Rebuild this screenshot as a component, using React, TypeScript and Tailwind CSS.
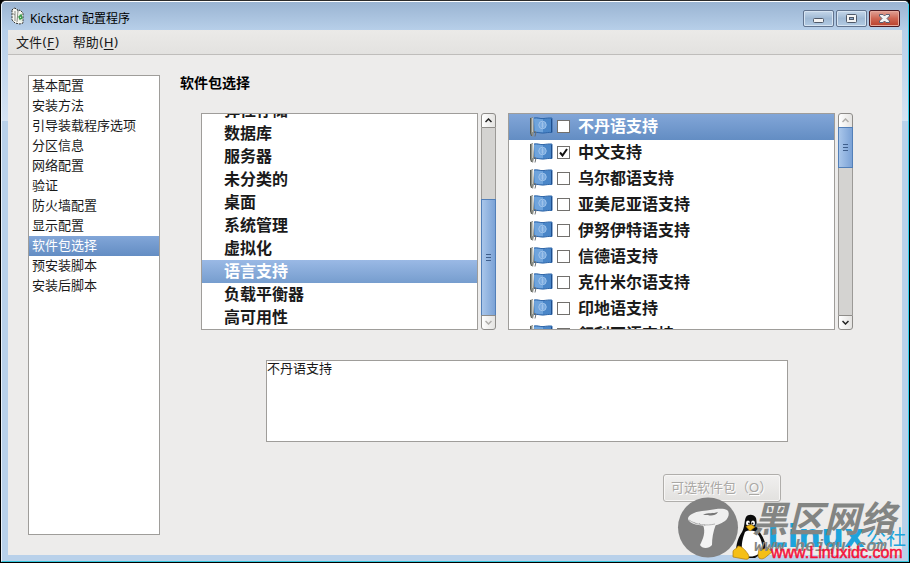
import { useState } from 'react';
import clsx from 'clsx';

const SECTIONS = [
  '基本配置',
  '安装方法',
  '引导装载程序选项',
  '分区信息',
  '网络配置',
  '验证',
  '防火墙配置',
  '显示配置',
  '软件包选择',
  '预安装脚本',
  '安装后脚本',
];

const GROUPS = [
  '弹性存储',
  '数据库',
  '服务器',
  '未分类的',
  '桌面',
  '系统管理',
  '虚拟化',
  '语言支持',
  '负载平衡器',
  '高可用性',
];

const PACKAGES = [
  '不丹语支持',
  '中文支持',
  '乌尔都语支持',
  '亚美尼亚语支持',
  '伊努伊特语支持',
  '信德语支持',
  '克什米尔语支持',
  '印地语支持',
  '叙利亚语支持',
];

function AppIcon() {
  return (
    <svg width="16" height="18" viewBox="0 0 16 18" aria-hidden="true">
      <path d="M2 3l2-2 3 1 1 2 2-1 3 3v10l-3 1-5-1-3-3z" fill="#f7f7f2" />
      <path d="M2 3l2-2 3 1 1 2 2-1 3 3v10l-3 1-5-1-3-3z" fill="none" stroke="#33342f" strokeDasharray="2 1" />
      <path d="M5 4v10M2 6l3 2M8 4l-1 11" stroke="#8b8d85" fill="none" />
      <path d="M8 6l4 2v7l-3-1z" fill="#e3efe1" />
      <path d="M11 8l-2 2 1 2 2-1z" fill="none" stroke="#3c9a4b" strokeWidth="1.500" />
    </svg>
  );
}

function FlagIcon() {
  return (
    <svg className="shrink-0" width="24" height="22" viewBox="0 0 24 22" aria-hidden="true">
      <path d="M1 2l3-1 1 15-1 5-2-2z" fill="#8b8e87" />
      <path d="M1.500 2v15l1 3" stroke="#55584f" fill="none" />
      <path d="M3.500 2v14" stroke="#c2c4bd" fill="none" />
      <path d="M5 2c4-.8 6 .9 9 .6 3-.3 6-.9 9-.5v14.400c-3-.4-6 .4-9 .6-3 0-5-1-9-.6z" fill="#4a86c8" />
      <path d="M5 2.500c3-.8 6 .8 9 .6v13.400c-3 .2-5-1-8-.6z" fill="#7fb0e4" opacity=".7" />
      <path d="M5 2c4-.8 6 .9 9 .6 3-.3 6-.9 9-.5v14.400c-3-.4-6 .4-9 .6-3 0-5-1-9-.6" fill="none" stroke="#2d65a8" />
      <circle cx="13.500" cy="9" r="3.700" fill="#6fa3dc" stroke="#a3c6ec" />
      <path d="M11.500 8h4M11.500 10h4M13.500 6v6" stroke="#a9caee" strokeWidth=".7" />
      <path d="M22.500 3v13" stroke="#1f4f8e" />
      <path d="M5 15.500l2 .5-1 4.500" stroke="#6a6e72" fill="none" />
    </svg>
  );
}

function WindowButton({ kind, label }: { kind: 'min' | 'max' | 'close'; label: string }) {
  return (
    <button
      type="button"
      aria-label={label}
      className={clsx(
        'flex h-[17px] w-[31px] items-center justify-center rounded-[2px] border',
        kind === 'close'
          ? 'border-[#4c1a22] bg-linear-to-b from-[#e0a196] via-[#cf6653] via-50% to-[#b93f2b] shadow-[inset_0_0_0_1px_#e7a99c]'
          : 'border-[#61738e] bg-linear-to-b from-[#c5d7ea] via-[#9fb9d4] via-50% to-[#b3cbe4] shadow-[inset_0_0_0_1px_#d6e4f2]'
      )}
    >
      <svg width="13" height="11" viewBox="0 0 13 11" aria-hidden="true">
        {kind === 'min' && <rect x="1.500" y="5.500" width="10" height="4" rx="1" fill="#f4f4f4" stroke="#4f5969" />}
        {kind === 'max' && (
          <>
            <rect x="1.500" y="1.500" width="10" height="8" rx="1" fill="#f4f4f4" stroke="#4f5969" />
            <rect x="4.500" y="4.500" width="4" height="2" fill="#8faccd" stroke="#4f5969" />
          </>
        )}
        {kind === 'close' && (
          <path
            d="M1.500 1.500h3.500L6.500 3 8 1.500h3.500V3L9 5.500 11.500 8v1.500H8L6.500 8 5 9.500H1.500V8L4 5.500 1.500 3z"
            fill="#f4f4f4"
            stroke="#5a5f73"
          />
        )}
      </svg>
    </button>
  );
}

interface ScrollBarProps {
  atTop?: boolean;
  atBottom?: boolean;
  thumbClass: string;
}

function ScrollBar({ atTop, atBottom, thumbClass }: ScrollBarProps) {
  const button = 'flex h-[15px] shrink-0 items-center justify-center border border-[#8e8c89] bg-linear-to-r from-white to-[#e4e3e1]';

  return (
    <div className="flex w-[15px] shrink-0 flex-col">
      <button type="button" aria-label="向上滚动" className={clsx(button, 'rounded-t-[3px]')}>
        <svg width="7" height="5" viewBox="0 0 7 5" aria-hidden="true">
          <path d="M.5 4l3-3 3 3" fill="none" stroke={atTop ? '#b0aeab' : '#222'} strokeWidth="1.500" />
        </svg>
      </button>
      <div className={clsx('flex min-h-0 flex-1 flex-col border-x border-[#9c9a97] bg-[#d4d3d1]', atBottom ? 'justify-end' : 'justify-start')}>
        <div
          className={clsx(
            '-m-px flex flex-col items-center justify-center gap-[2px] border border-[#527fb8] bg-linear-to-r from-[#a9c6ea] to-[#7ba2d6]',
            thumbClass
          )}
        >
          <span className="h-px w-[5px] bg-[#3f5f8c]" />
          <span className="h-px w-[5px] bg-[#3f5f8c]" />
          <span className="h-px w-[5px] bg-[#3f5f8c]" />
        </div>
      </div>
      <button type="button" aria-label="向下滚动" className={clsx(button, 'rounded-b-[3px]')}>
        <svg width="7" height="5" viewBox="0 0 7 5" aria-hidden="true">
          <path d="M.5 1l3 3 3-3" fill="none" stroke={atBottom ? '#b0aeab' : '#222'} strokeWidth="1.500" />
        </svg>
      </button>
    </div>
  );
}

function Watermark() {
  return (
    <svg
      className="pointer-events-none absolute right-0 bottom-0"
      width="240"
      height="73"
      viewBox="0 0 240 73"
      fontFamily='"Liberation Sans", "Noto Sans CJK SC", sans-serif'
      aria-hidden="true"
    >
      {/* mushroom badge */}
      <g transform="translate(1 1)">
        <circle cx="38" cy="37.500" r="30" fill="#828282" />
        <path d="M18 29c0-4 6-7 14-8 9-1 20-4 25-1 3 2 2 8-2 11-4 3-10 5-16 5-9 0-20-2-21-7z" fill="#efefef" />
        <path d="M33 35c3 7 0 14-3 20 2 4 9 4 12 0 0-7 1-13 4-21z" fill="#f4f4f4" />
        <path d="M33 25c5-3 10-1 15-3-2 4-8 4-10 3z" fill="#777" />
        <path d="M19 30c7 5 18 6 26 4M24 32l2 2M29 33l2 2M34 34l1 2" stroke="#b5b5b5" fill="none" />
      </g>

      {/* penguin */}
      <g transform="translate(1 1)">
        <path d="M76 27c2-3 8-3 10 1 1 4 0 8 3 13 5 7 8 14 6 20l-10 7H76l-10-6c0-8 2-14 6-20 3-5 2-11 4-15z" fill="#0b0b0b" />
        <path d="M75 42c3-2 9-2 12 1 4 5 6 12 5 17-3 6-13 9-18 4-4-5-2-14 1-22z" fill="#fff" />
        <ellipse cx="78" cy="33" rx="2" ry="2.500" fill="#fff" />
        <ellipse cx="83" cy="33" rx="2" ry="2.500" fill="#fff" />
        <circle cx="79" cy="33.500" r="1" fill="#111" />
        <circle cx="82.500" cy="33.500" r="1" fill="#111" />
        <path d="M76 36.500l5-2 4 2.500-5 4z" fill="#f2bd18" stroke="#a97408" strokeWidth=".6" />
        <path d="M68 56c-2 4-5 3-5 6l0 5 11 2c5 1 6-1 4-5-3-4-6-8-10-8z" fill="#f5bf17" stroke="#ae7a07" strokeWidth=".7" />
        <path d="M89 57c0 5-2 8 0 11 3 2 6 0 8-2l5-4-5-5c-3 3-6 3-8 0z" fill="#f5bf17" stroke="#ae7a07" strokeWidth=".7" />
      </g>

      <text x="98" y="58" fontSize="32" fontWeight="700" fill="#1da3dc" fontFamily='"DejaVu Sans", sans-serif'>Linux</text>
      <text x="197" y="56" fontSize="20" fill="#20a5dc">公社</text>
      <text x="83" y="43" fontSize="36" fontWeight="700" fontStyle="italic" fill="#838583">黑区网络</text>
      <text x="85" y="62" fontSize="17" fontWeight="700" fontStyle="italic" fill="#838583" fontFamily='"Liberation Mono", monospace'>www.heiqu.com</text>
      <text x="102" y="69" fontSize="16" fill="#f5123a" stroke="#f5123a" strokeWidth=".5">www.Linuxidc.com</text>
    </svg>
  );
}

export default function App() {
  const [section, setSection] = useState('软件包选择');
  const [group, setGroup] = useState('语言支持');
  const [current, setCurrent] = useState('不丹语支持');
  const [checked, setChecked] = useState<string[]>(['中文支持']);

  const toggle = (name: string) => {
    setCurrent(name);
    setChecked((prev) => (prev.includes(name) ? prev.filter((p) => p !== name) : [...prev, name]));
  };

  return (
    <div className="min-h-screen bg-black font-['Liberation_Sans','Noto_Sans_CJK_SC',sans-serif] text-[13px] text-[#1a1a1a]">
      <div className="relative flex min-h-screen flex-col rounded-t-[6px] border border-t-[#2b2b2b] border-r-black border-b-black border-l-black bg-[linear-gradient(to_bottom,#b7cfe9_30px,#d5e3f3_120px,#b9d1ea_120px)]">
        <div className="flex flex-1 flex-col rounded-t-[5px] border border-t-white border-r-[#35d0ec] border-b-[#35c6dc] border-l-[#eaf2fa]">
          <header className="flex h-7 items-center rounded-t-[4px] bg-linear-to-b from-[#9ab4d2] to-[#b7cfe9] pr-2 pl-2">
            <AppIcon />
            <h1 className="ml-1 flex-1 pt-[6px] font-['Noto_Sans','Noto_Sans_CJK_SC',sans-serif] text-[12px] leading-5 text-black">
              Kickstart 配置程序
            </h1>
            <div className="flex gap-[2px] pt-[5px]">
              <WindowButton kind="min" label="最小化" />
              <WindowButton kind="max" label="最大化" />
              <WindowButton kind="close" label="关闭" />
            </div>
          </header>

          <div className="mx-[6px] mb-[6px] flex flex-1 flex-col bg-[#edeceb]">
            <nav className="flex h-[25px] items-center gap-[13px] border-b border-[#bfbdbb] bg-linear-to-b from-[#ebeae8] to-[#e3e2e0] pt-px pl-2 font-['DejaVu_Sans','Noto_Sans_CJK_SC',sans-serif]">
              <button type="button">
                文件(<u className="underline-offset-2">F</u>)
              </button>
              <button type="button">
                帮助(<u className="underline-offset-2">H</u>)
              </button>
            </nav>

            <div className="flex flex-1 gap-5 p-5">
              <ul className="w-[132px] shrink-0 border border-[#9f9d9a] bg-white">
                {SECTIONS.map((name) => (
                  <li key={name}>
                    <button
                      type="button"
                      onClick={() => setSection(name)}
                      className={clsx(
                        'block h-5 w-full pl-[3px] text-left leading-5',
                        section === name && 'bg-linear-to-b from-[#82a6d8] to-[#638dc3] text-white'
                      )}
                    >
                      {name}
                    </button>
                  </li>
                ))}
              </ul>

              <main className="min-w-0 flex-1">
                <h2 className="h-[38px] text-[14px] leading-4 font-bold text-black">软件包选择</h2>

                <div className="mr-[29px] ml-[21px] flex h-[217px] gap-3 font-bold">
                  <div className="flex min-w-0 flex-[295_1_0%] gap-[3px]">
                    <ul className="flex min-w-0 flex-1 flex-col justify-end overflow-hidden border border-[#9f9d9a] bg-white">
                      {GROUPS.map((name) => (
                        <li key={name} className="shrink-0">
                          <button
                            type="button"
                            onClick={() => setGroup(name)}
                            className={clsx(
                              'block h-[23px] w-full pl-[22px] text-left text-[16px] leading-[23px]',
                              group === name && 'bg-linear-to-b from-[#9ab9e5] to-[#769dce] text-white'
                            )}
                          >
                            {name}
                          </button>
                        </li>
                      ))}
                    </ul>
                    <ScrollBar atBottom thumbClass="h-[117px]" />
                  </div>

                  <div className="flex min-w-0 flex-[345_1_0%] gap-[3px]">
                    <ul className="min-w-0 flex-1 overflow-hidden border border-[#9f9d9a] bg-white">
                      {PACKAGES.map((name) => (
                        <li
                          key={name}
                          className={clsx(
                            'h-[26px]',
                            current === name && 'bg-linear-to-b from-[#82a6d8] to-[#638dc3] text-white'
                          )}
                        >
                          <label className="flex h-full items-center pl-5 text-[16px] leading-6">
                            <FlagIcon />
                            <span className="mb-0.5 ml-1 grid shrink-0 place-items-center">
                              <input
                                type="checkbox"
                                checked={checked.includes(name)}
                                onChange={() => toggle(name)}
                                className="peer col-start-1 row-start-1 size-[13px] appearance-none border border-[#72706d] bg-white"
                              />
                              <svg
                                className="pointer-events-none invisible col-start-1 row-start-1 peer-checked:visible"
                                width="9"
                                height="9"
                                viewBox="0 0 9 9"
                                aria-hidden="true"
                              >
                                <path d="M1 4.500l2.500 3L8 1" fill="none" stroke="#111" strokeWidth="2" />
                              </svg>
                            </span>
                            <span className="ml-2">{name}</span>
                          </label>
                        </li>
                      ))}
                    </ul>
                    <ScrollBar atTop thumbClass="h-[41px]" />
                  </div>
                </div>

                <div className="mt-[30px] mr-[94px] ml-[86px]">
                  <textarea
                    readOnly
                    aria-label="说明"
                    value={current}
                    className="block h-[82px] w-full resize-none border border-[#9f9d9a] bg-white leading-4 outline-none"
                  />
                </div>

                <div className="mt-8 mr-[101px] flex justify-end">
                  <button
                    type="button"
                    disabled
                    className="h-7 w-[118px] rounded-[3px] border border-[#b0aeab] bg-linear-to-b from-[#f1f0ef] to-[#e2e1df] pl-[7px] text-left whitespace-nowrap text-[#aaa8a5] shadow-[inset_0_0_0_1px_#f7f6f5] [text-shadow:1px_1px_0_white]"
                  >
                    可选软件包（<u className="underline-offset-2">O</u>）
                  </button>
                </div>
              </main>
            </div>
          </div>
        </div>
        <Watermark />
      </div>
    </div>
  );
}
